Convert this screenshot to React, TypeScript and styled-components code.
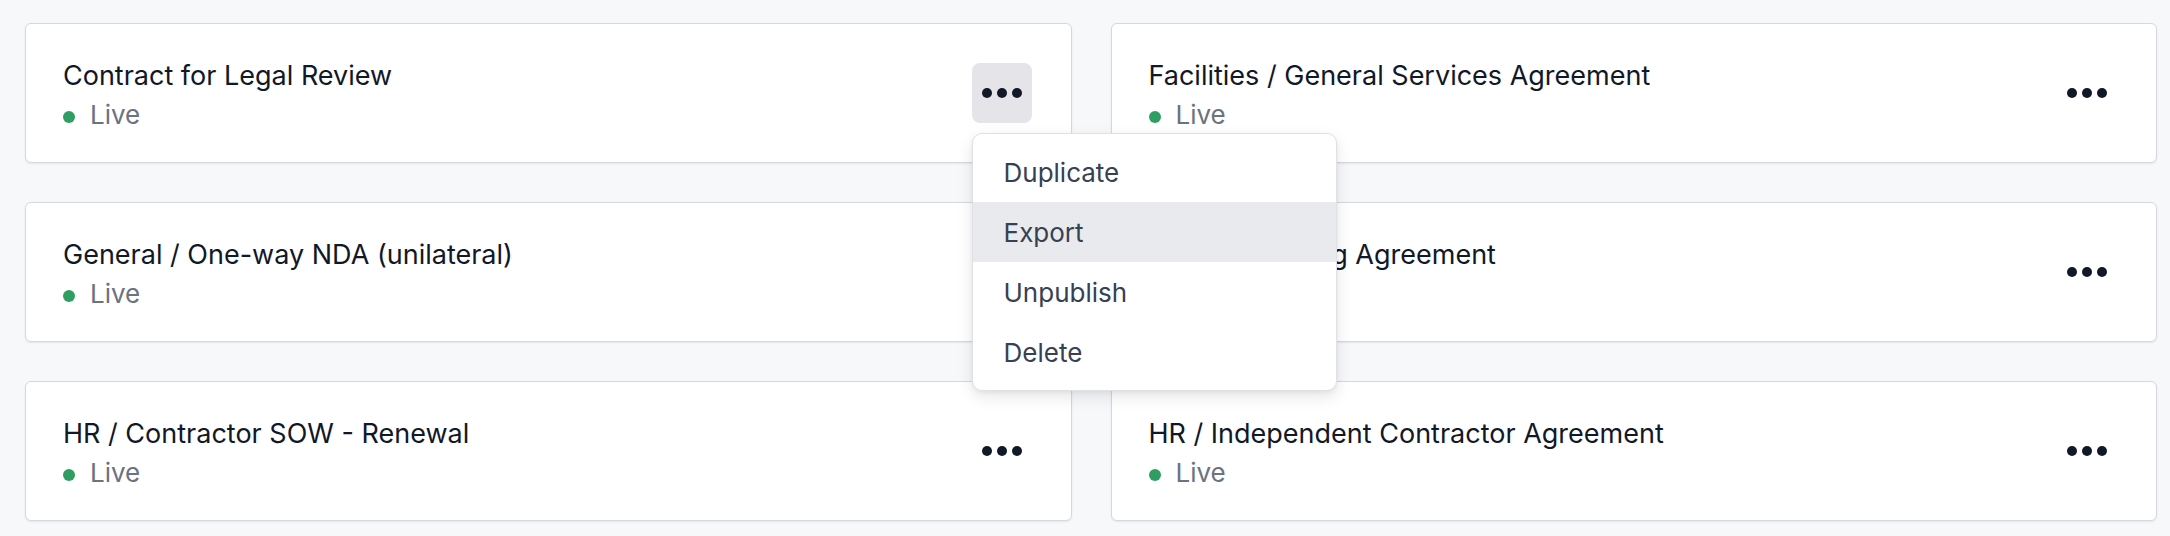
import React from "react";
import styled, { createGlobalStyle } from "styled-components";

const GlobalStyle = createGlobalStyle`
  html, body {
    margin: 0;
    padding: 0;
    background: #f7f8fa;
    font-family: Inter, "Noto Sans", "Liberation Sans", sans-serif;
    -webkit-font-smoothing: antialiased;
  }
`;

const Page = styled.div`
  width: 2170px;
  height: 536px;
  box-sizing: border-box;
  padding: 23px 13px 0 25px;
  background: #f7f8fa;
`;

const Grid = styled.div`
  display: grid;
  grid-template-columns: 1fr 1fr;
  column-gap: 39px;
  row-gap: 39px;
`;

const Card = styled.div`
  height: 140px;
  box-sizing: border-box;
  display: flex;
  align-items: center;
  justify-content: space-between;
  padding: 0 39px 0 37px;
  background: #ffffff;
  border: 1.5px solid #d6d8dd;
  border-radius: 6px;
  box-shadow: 0 1px 2px rgba(16, 24, 40, 0.08);
`;

const Info = styled.div`
  display: flex;
  flex-direction: column;
  padding-top: 4px;
`;

const Title = styled.div`
  font-size: 27px;
  line-height: 38px;
  color: #111827;
`;

const Status = styled.div`
  display: flex;
  align-items: center;
  gap: 15px;
  font-size: 26px;
  line-height: 39px;
  color: #6b7280;
`;

const StatusDot = styled.span`
  width: 12px;
  height: 12px;
  margin-top: 5px;
  border-radius: 50%;
  background: #2f9e62;
`;

const Actions = styled.div`
  position: relative;
`;

const MoreButton = styled.button<{ $active?: boolean }>`
  width: 60px;
  height: 60px;
  padding: 0;
  border: none;
  border-radius: 8px;
  display: flex;
  align-items: center;
  justify-content: center;
  gap: 5px;
  cursor: pointer;
  background: ${(p) => (p.$active ? "#e4e4e9" : "transparent")};
`;

const Dot = styled.span`
  width: 10px;
  height: 10px;
  border-radius: 50%;
  background: #111827;
`;

const Menu = styled.div`
  position: absolute;
  top: calc(100% + 10px);
  left: 0;
  z-index: 10;
  width: 365px;
  box-sizing: border-box;
  padding: 8px 0;
  background: #ffffff;
  border: 1.5px solid #dfe1e5;
  border-radius: 10px;
  box-shadow: 0 6px 16px rgba(16, 24, 40, 0.1), 0 2px 4px rgba(16, 24, 40, 0.05);
`;

const MenuItem = styled.div<{ $highlighted?: boolean }>`
  height: 60px;
  display: flex;
  align-items: center;
  padding-left: 31px;
  font-size: 26px;
  color: #374151;
  background: ${(p) => (p.$highlighted ? "#e9eaee" : "transparent")};
`;

const templates = [
  "Contract for Legal Review",
  "Facilities / General Services Agreement",
  "General / One-way NDA (unilateral)",
  "HR / Consulting Agreement",
  "HR / Contractor SOW - Renewal",
  "HR / Independent Contractor Agreement",
];

const menuItems = ["Duplicate", "Export", "Unpublish", "Delete"];

const TemplateCard = ({ title, open }: { title: string; open?: boolean }) => (
  <Card>
    <Info>
      <Title>{title}</Title>
      <Status>
        <StatusDot />
        Live
      </Status>
    </Info>
    <Actions>
      <MoreButton $active={open} aria-label="More actions">
        <Dot />
        <Dot />
        <Dot />
      </MoreButton>
      {open && (
        <Menu>
          {menuItems.map((item) => (
            <MenuItem key={item} $highlighted={item === "Export"}>
              {item}
            </MenuItem>
          ))}
        </Menu>
      )}
    </Actions>
  </Card>
);

export default function App() {
  return (
    <>
      <GlobalStyle />
      <Page>
        <Grid>
          {templates.map((t, i) => (
            <TemplateCard key={t} title={t} open={i === 0} />
          ))}
        </Grid>
      </Page>
    </>
  );
}
